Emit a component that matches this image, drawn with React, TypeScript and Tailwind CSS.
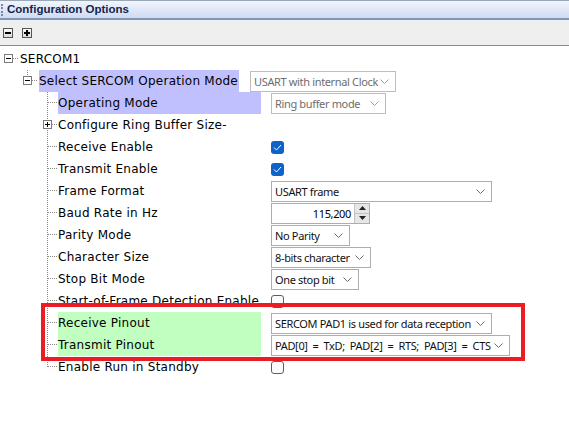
import type { ReactNode } from "react"

const treeFont = { fontFamily: '"DejaVu Sans", Verdana, sans-serif' }
const valueFont = { fontFamily: '"Noto Sans", "Open Sans", sans-serif' }

const Chevron = ({ color = "#6b6b6b" }: { color?: string }) => (
  <svg width="9" height="5" viewBox="0 0 9 5" className="shrink-0">
    <path d="M0.5 0.5 L4.5 4.5 L8.5 0.5" fill="none" stroke={color} strokeWidth="1" />
  </svg>
)

const Dropdown = ({
  text,
  width,
  disabled,
  wide,
}: {
  text: string
  width: string
  disabled?: boolean
  wide?: boolean
}) => (
  <div
    className={`${width} h-[21px] flex items-center justify-between pl-[3px] pr-[6px] border bg-white text-[11px] tracking-[-0.35px] ${
      disabled ? "border-[#bdbdbd] text-[#6d6d6d]" : "border-[#adadad] text-[#111]"
    }`}
    style={valueFont}
  >
    <span className={`whitespace-nowrap leading-none ${wide ? "[word-spacing:2.5px]" : ""}`}>{text}</span>
    <Chevron color={disabled ? "#a0a0a0" : "#6b6b6b"} />
  </div>
)

const Checkbox = ({ checked }: { checked?: boolean }) =>
  checked ? (
    <div className="w-[13px] h-[13px] rounded-[3px] bg-[#0f63c8] flex items-center justify-center">
      <svg width="9" height="7" viewBox="0 0 9 7">
        <path d="M1 3.5 L3.5 6 L8 1" fill="none" stroke="#fff" strokeWidth="1" />
      </svg>
    </div>
  ) : (
    <div className="w-[13px] h-[13px] rounded-[3px] border border-[#5f5f5f] bg-[#fbfbfb]" />
  )

const Spinner = () => (
  <div
    className="w-[99px] h-[21px] flex border border-[#adadad] bg-white text-[11px] tracking-[-0.35px]"
    style={valueFont}
  >
    <div className="flex-1 flex items-center justify-end pr-[3px] leading-none">115,200</div>
    <div className="w-[15px] flex flex-col border-l border-[#c4c4c4]">
      <div className="flex-1 bg-[#e6e6e6] border-b border-[#c4c4c4] flex items-center justify-center">
        <svg width="7" height="4" viewBox="0 0 7 4">
          <path d="M0 4 L3.5 0 L7 4 Z" fill="#222" />
        </svg>
      </div>
      <div className="flex-1 bg-[#e6e6e6] flex items-center justify-center">
        <svg width="7" height="4" viewBox="0 0 7 4">
          <path d="M0 0 L3.5 4 L7 0 Z" fill="#222" />
        </svg>
      </div>
    </div>
  </div>
)

// expander box drawn at (x, 7) in a 22px tall row
const Expander = ({ x, plus }: { x: number; plus?: boolean }) => (
  <g>
    <rect x={x + 0.5} y={6.5} width={8} height={8} fill="#fff" stroke="#7a7a7a" />
    <line x1={x + 2} y1={10.5} x2={x + 7} y2={10.5} stroke="#000" />
    {plus && <line x1={x + 4.5} y1={8} x2={x + 4.5} y2={13} stroke="#000" />}
  </g>
)

const dot = { stroke: "#8a8a8a", strokeDasharray: "1 1" }

type Kind = "root" | "group" | "leaf" | "leafPlus" | "leafLast"

const Gutter = ({ kind }: { kind: Kind }) => {
  if (kind === "root")
    return (
      <svg width="20" height="22" className="shrink-0">
        <Expander x={4} />
        <line x1={13} y1={10.5} x2={19} y2={10.5} {...dot} />
      </svg>
    )
  if (kind === "group")
    return (
      <svg width="39" height="22" className="shrink-0">
        <line x1={27.5} y1={0} x2={27.5} y2={6} {...dot} />
        <Expander x={23} />
        <line x1={32} y1={10.5} x2={38} y2={10.5} {...dot} />
      </svg>
    )
  return (
    <svg width="58" height="22" className="shrink-0">
      {kind === "leafPlus" ? (
        <>
          <line x1={47.5} y1={0} x2={47.5} y2={6} {...dot} />
          <line x1={47.5} y1={16} x2={47.5} y2={22} {...dot} />
          <Expander x={43} plus />
          <line x1={52} y1={10.5} x2={57} y2={10.5} {...dot} />
        </>
      ) : (
        <>
          <line x1={47.5} y1={0} x2={47.5} y2={kind === "leafLast" ? 11 : 22} {...dot} />
          <line x1={48} y1={10.5} x2={57} y2={10.5} {...dot} />
        </>
      )}
    </svg>
  )
}

const Row = ({
  kind,
  label,
  bg,
  value,
}: {
  kind: Kind
  label: string
  bg?: string
  value?: ReactNode
}) => (
  <div className="h-[22px] flex items-center">
    <Gutter kind={kind} />
    {kind === "root" ? (
      <span className="text-[12px] tracking-[0.25px] text-black whitespace-nowrap" style={treeFont}>
        {label}
      </span>
    ) : (
      <>
        <div
          className={`${kind === "group" ? "w-[200px]" : "w-[203px]"} h-[22px] flex items-center ${bg ?? ""} text-[12px] tracking-[0.25px] text-black whitespace-nowrap`}
          style={treeFont}
        >
          {label}
        </div>
        <div className={kind === "group" ? "ml-[11px]" : "ml-[10px]"}>{value}</div>
      </>
    )}
  </div>
)

export default function App() {
  return (
    <div className="w-[569px] h-[441px] bg-white overflow-hidden">
      {/* Title bar */}
      <div className="h-[20px] border-t border-[#9aa9b8] border-b-2 border-b-[#7f98b8] bg-gradient-to-b from-[#f1f5fc] to-[#cfdbf4] flex items-center">
        <div className="w-[2px] h-[12px] ml-[1px] border-l-2 border-dotted border-[#7a8aa0]" />
        <span
          className="ml-[4px] text-[11.5px] font-bold text-[#13254a] leading-none"
          style={{ fontFamily: '"Liberation Sans", Arial, sans-serif' }}
        >
          Configuration Options
        </span>
      </div>

      {/* Toolbar */}
      <div className="h-[26px] bg-[#efefef] border-b border-[#8a8a8a] flex items-center gap-[9px] pl-[3px]">
        <div className="w-[10px] h-[10px] border border-[#555] bg-gradient-to-b from-[#fafafa] to-[#dcdcdc] flex items-center justify-center">
          <div className="w-[6px] h-[2px] bg-black" />
        </div>
        <div className="w-[10px] h-[10px] border border-[#555] bg-gradient-to-b from-[#fafafa] to-[#dcdcdc] flex items-center justify-center relative">
          <div className="w-[6px] h-[2px] bg-black" />
          <div className="absolute w-[2px] h-[6px] bg-black" />
        </div>
      </div>

      {/* Tree */}
      <div className="relative pt-[2px]">
        <Row kind="root" label="SERCOM1" />
        <Row
          kind="group"
          label="Select SERCOM Operation Mode"
          bg="bg-[#c0c0ff]"
          value={<Dropdown text="USART with internal Clock" width="w-[146px]" disabled />}
        />
        <Row
          kind="leaf"
          label="Operating Mode"
          bg="bg-[#c0c0ff]"
          value={<Dropdown text="Ring buffer mode" width="w-[115px]" disabled />}
        />
        <Row kind="leafPlus" label="Configure Ring Buffer Size-" />
        <Row kind="leaf" label="Receive Enable" value={<Checkbox checked />} />
        <Row kind="leaf" label="Transmit Enable" value={<Checkbox checked />} />
        <Row kind="leaf" label="Frame Format" value={<Dropdown text="USART frame" width="w-[221px]" />} />
        <Row kind="leaf" label="Baud Rate in Hz" value={<Spinner />} />
        <Row kind="leaf" label="Parity Mode" value={<Dropdown text="No Parity" width="w-[79px]" />} />
        <Row kind="leaf" label="Character Size" value={<Dropdown text="8-bits character" width="w-[100px]" />} />
        <Row kind="leaf" label="Stop Bit Mode" value={<Dropdown text="One stop bit" width="w-[88px]" />} />
        <Row kind="leaf" label="Start-of-Frame Detection Enable" value={<Checkbox />} />
        <Row
          kind="leaf"
          label="Receive Pinout"
          bg="bg-[#c0ffc0]"
          value={<Dropdown text="SERCOM PAD1 is used for data reception" width="w-[221px]" />}
        />
        <Row
          kind="leaf"
          label="Transmit Pinout"
          bg="bg-[#c0ffc0]"
          value={<Dropdown text="PAD[0] = TxD; PAD[2] = RTS; PAD[3] = CTS" width="w-[239px]" wide />}
        />
        <Row kind="leafLast" label="Enable Run in Standby" value={<Checkbox />} />

        {/* annotation box */}
        <div className="absolute left-[41px] top-[257px] w-[484px] h-[58px] border-4 border-[#ec1c24]" />
      </div>
    </div>
  )
}
